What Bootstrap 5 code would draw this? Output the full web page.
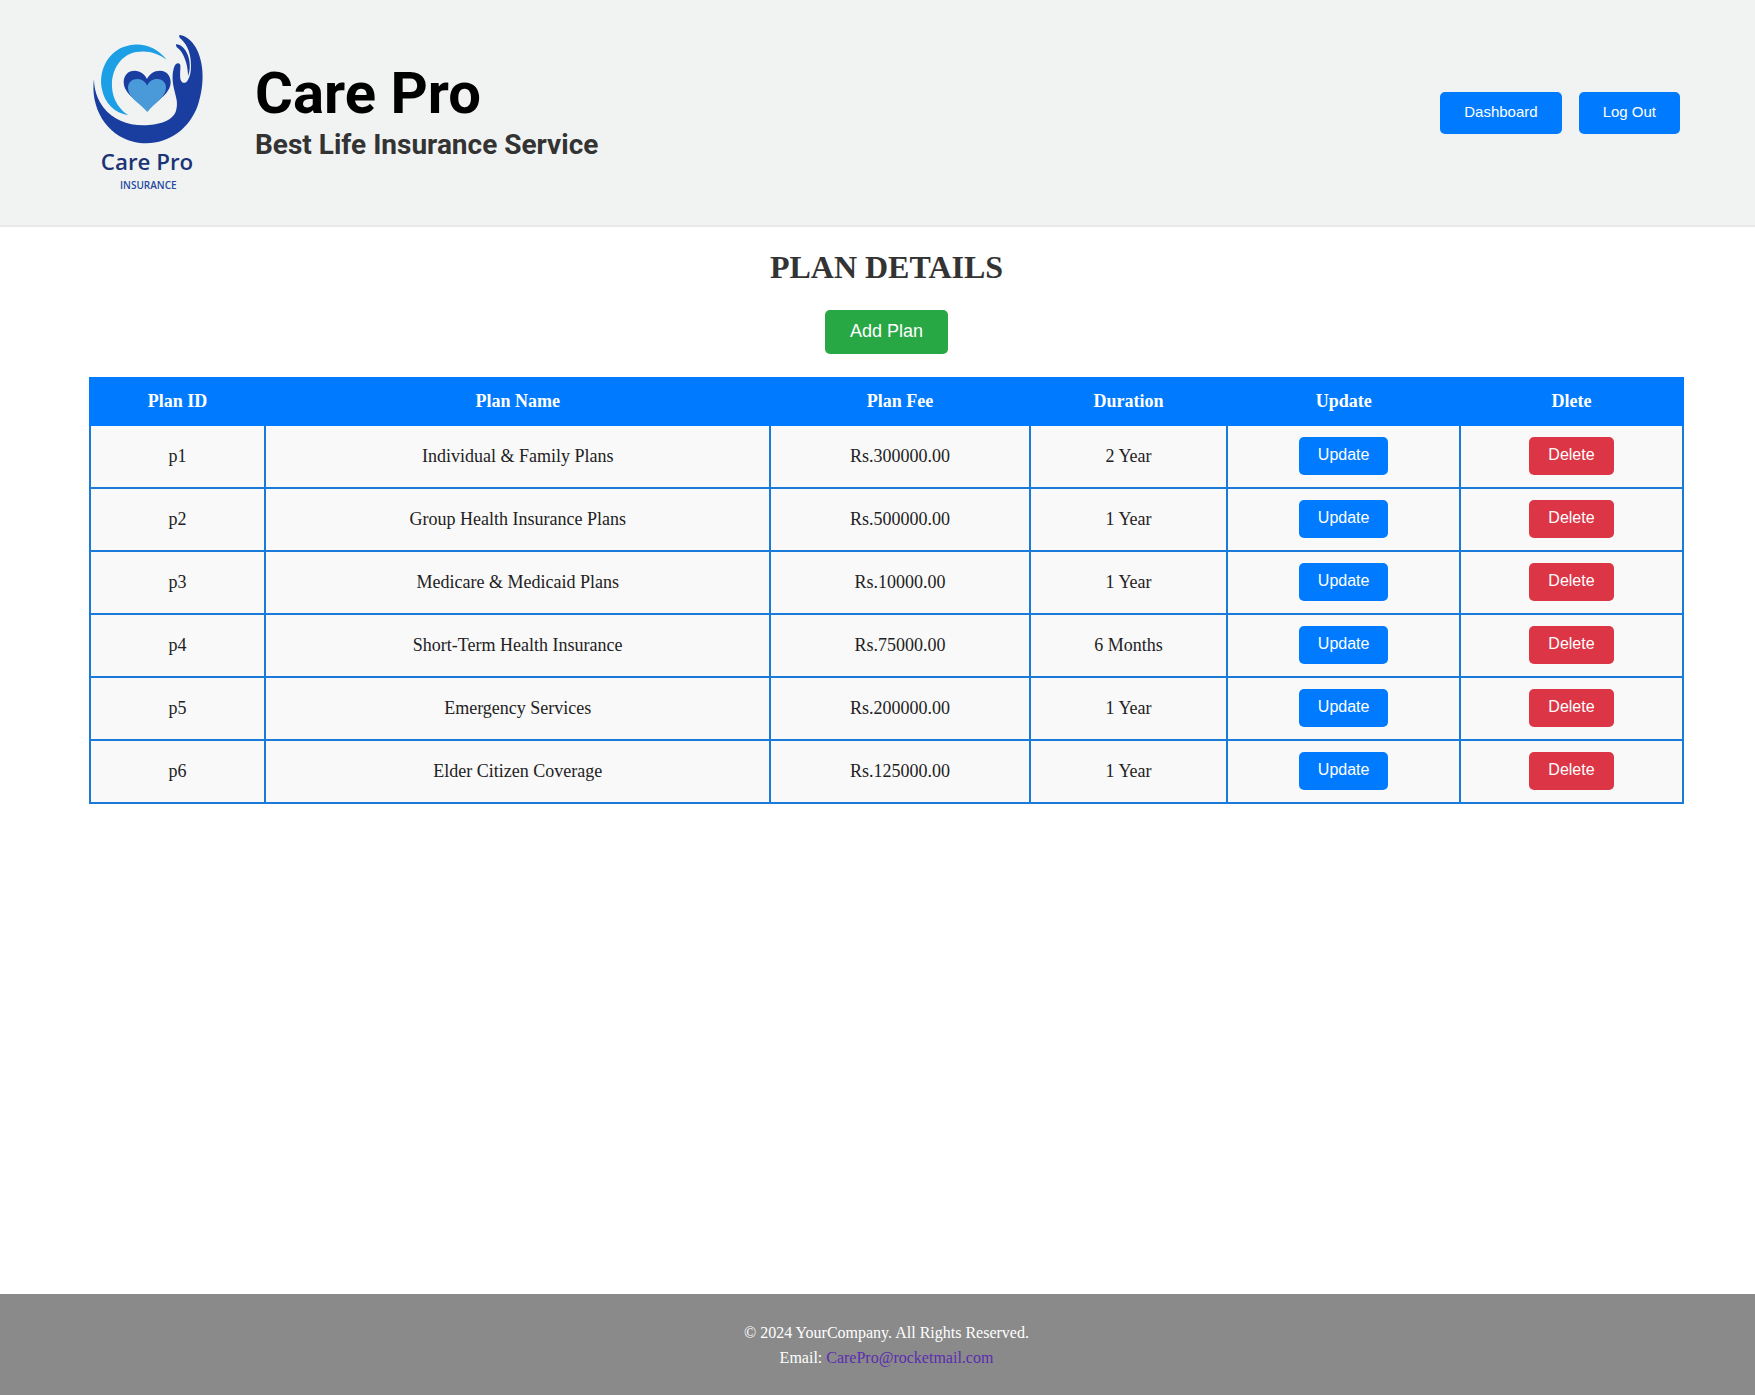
<!DOCTYPE html>
<html lang="en">
<head>
<meta charset="utf-8">
<meta name="viewport" content="width=device-width, initial-scale=1">
<title>Care Pro - Plan Details</title>
<link href="https://cdn.jsdelivr.net/npm/bootstrap@5.3.0/dist/css/bootstrap.min.css" rel="stylesheet">
<style>
  body { font-family: "Liberation Serif", "Times New Roman", serif; color: #222; background: #fff; }
  .site-header { background: #f1f3f2; border-bottom: 2px solid #e8eaea; padding: 30px 75px 26px 90px; }
  .brand-logo { width: 117px; height: 169px; }
  .brand-text { margin-left: 48px; margin-bottom: 6px; font-family: Roboto, sans-serif; }
  .brand-name { margin-bottom: 6px; font-size: 58px; line-height: 60px; font-weight: 700; color: #000; }
  .brand-tag { font-size: 28px; line-height: 32px; font-weight: 700; color: #333; }
  .account-nav { margin-bottom: 4px; gap: 17px; }
  .btn-site { --bs-btn-color: #fff; --bs-btn-hover-color: #fff; --bs-btn-active-color: #fff; border: 0; border-radius: 5px; font-family: "Liberation Sans", Arial, sans-serif; }
  .btn-blue { --bs-btn-bg: #007bff; --bs-btn-hover-bg: #0069d9; --bs-btn-active-bg: #0062cc; }
  .btn-green { --bs-btn-bg: #28a745; --bs-btn-hover-bg: #218838; --bs-btn-active-bg: #1e7e34; }
  .btn-red { --bs-btn-bg: #dc3545; --bs-btn-hover-bg: #c82333; --bs-btn-active-bg: #bd2130; }
  .btn-nav { padding: 10px 24px 12px; font-size: 15px; line-height: 20px; }
  .btn-add { padding: 10px 25px 12px; font-size: 18px; line-height: 22px; }
  .btn-row { padding: 8px 19px 10px; font-size: 16px; line-height: 20px; }
  .site-main, .site-footer { padding-left: 89px; padding-right: 71px; }
  .page-title { margin: 22px 0 24px; font-size: 32px; line-height: 37px; font-weight: 700; color: #333; }
  .plan-table { margin-top: 23px; border-collapse: collapse; table-layout: fixed; font-size: 18px; line-height: 22px; }
  .plan-table th, .plan-table td { border: 2px solid #1a7ad9; text-align: center; vertical-align: middle; }
  .plan-table th { background: #007bff; border-color: #007bff; color: #fff; padding: 11px 8px 12px; font-weight: 700; }
  .plan-table td { background: #f9f9f9; padding: 11px 8px 12px; }
  .w-id { width: 11%; } .w-name { width: 31.7%; } .w-fee { width: 16.3%; }
  .w-term { width: 12.4%; } .w-upd { width: 14.6%; } .w-del { width: 14%; }
  .site-footer { background: #8a8a8a; color: #fff; padding-top: 26px; padding-bottom: 25px; font-size: 16px; line-height: 25px; }
  .site-footer a { color: #5a2db0; text-decoration: none; }
</style>
<script src="https://cdn.jsdelivr.net/npm/bootstrap@5.3.0/dist/js/bootstrap.bundle.min.js"></script>
</head>
<body class="d-flex flex-column min-vh-100">
<header class="site-header d-flex align-items-center">
  <svg class="brand-logo flex-shrink-0" viewBox="60 30 351 507" role="img" aria-label="Care Pro Insurance logo">
    <path fill="#1c9fe5" d="M290 119C261 79 205 61 158 82C111 102 87 153 95 204C103 250 134 279 175 286C139 263 123 225 126 184C131 137 159 103 199 96C233 90 265 100 290 119Z"/>
    <path fill="#193ea0" d="M72 176C60 263 109 345 190 365C276 385 354 337 383 257C406 190 401 124 377 82C366 63 347 47 330 45C325 47 328 53 334 58C353 76 363 102 363 137C363 155 360 169 354 179C347 193 334 191 331 176C329 161 332 149 331 135C328 127 319 128 315 136C306 153 306 182 312 206C318 233 326 248 317 276C307 299 278 312 237 315C181 320 130 300 101 263C82 238 72 209 72 176Z"/>
    <path fill="#193ea0" d="M318 73C330 72 345 84 353 104C361 124 362 148 354 168C354 141 346 113 333 94C326 85 317 83 318 73Z"/>
    <path fill="#193ea0" d="M232 272C207 244 162 224 161 187C161 166 174 152 194 152C211 152 225 163 231 177C238 162 252 152 270 152C291 152 302 168 302 187C301 224 256 244 232 272Z"/>
    <path fill="#4a9ada" d="M232 276C211 251 174 233 174 205C174 186 187 177 202 177C217 177 227 186 231 197C237 185 247 177 262 177C278 177 289 189 288 205C287 232 251 252 232 276Z"/>
    <text x="231" y="449" text-anchor="middle" font-family="'Open Sans', sans-serif" font-size="67" font-weight="600" fill="#1b3476">Care Pro</text>
    <text x="235" y="507" text-anchor="middle" font-family="'Open Sans', sans-serif" font-size="30" font-weight="600" fill="#2549a0">INSURANCE</text>
  </svg>
  <div class="brand-text">
    <h1 class="brand-name">Care Pro</h1>
    <h2 class="brand-tag mb-0">Best Life Insurance Service</h2>
  </div>
  <nav class="account-nav d-flex ms-auto" aria-label="Account">
    <button type="button" class="btn btn-site btn-blue btn-nav">Dashboard</button>
    <button type="button" class="btn btn-site btn-blue btn-nav">Log Out</button>
  </nav>
</header>
<main class="site-main text-center">
  <h2 class="page-title">PLAN DETAILS</h2>
  <button type="button" class="btn btn-site btn-green btn-add">Add Plan</button>
  <table class="plan-table w-100">
    <colgroup><col class="w-id"><col class="w-name"><col class="w-fee"><col class="w-term"><col class="w-upd"><col class="w-del"></colgroup>
    <thead>
      <tr><th scope="col">Plan ID</th><th scope="col">Plan Name</th><th scope="col">Plan Fee</th><th scope="col">Duration</th><th scope="col">Update</th><th scope="col">Dlete</th></tr>
    </thead>
    <tbody>
      <tr><td>p1</td><td>Individual &amp; Family Plans</td><td>Rs.300000.00</td><td>2 Year</td><td><button type="button" class="btn btn-site btn-blue btn-row">Update</button></td><td><button type="button" class="btn btn-site btn-red btn-row">Delete</button></td></tr>
      <tr><td>p2</td><td>Group Health Insurance Plans</td><td>Rs.500000.00</td><td>1 Year</td><td><button type="button" class="btn btn-site btn-blue btn-row">Update</button></td><td><button type="button" class="btn btn-site btn-red btn-row">Delete</button></td></tr>
      <tr><td>p3</td><td>Medicare &amp; Medicaid Plans</td><td>Rs.10000.00</td><td>1 Year</td><td><button type="button" class="btn btn-site btn-blue btn-row">Update</button></td><td><button type="button" class="btn btn-site btn-red btn-row">Delete</button></td></tr>
      <tr><td>p4</td><td>Short-Term Health Insurance</td><td>Rs.75000.00</td><td>6 Months</td><td><button type="button" class="btn btn-site btn-blue btn-row">Update</button></td><td><button type="button" class="btn btn-site btn-red btn-row">Delete</button></td></tr>
      <tr><td>p5</td><td>Emergency Services</td><td>Rs.200000.00</td><td>1 Year</td><td><button type="button" class="btn btn-site btn-blue btn-row">Update</button></td><td><button type="button" class="btn btn-site btn-red btn-row">Delete</button></td></tr>
      <tr><td>p6</td><td>Elder Citizen Coverage</td><td>Rs.125000.00</td><td>1 Year</td><td><button type="button" class="btn btn-site btn-blue btn-row">Update</button></td><td><button type="button" class="btn btn-site btn-red btn-row">Delete</button></td></tr>
    </tbody>
  </table>
</main>
<footer class="site-footer text-center mt-auto">
  <p class="mb-0">© 2024 YourCompany. All Rights Reserved.</p>
  <p class="mb-0">Email: <a href="mailto:CarePro@rocketmail.com">CarePro@rocketmail.com</a></p>
</footer>
</body>
</html>
